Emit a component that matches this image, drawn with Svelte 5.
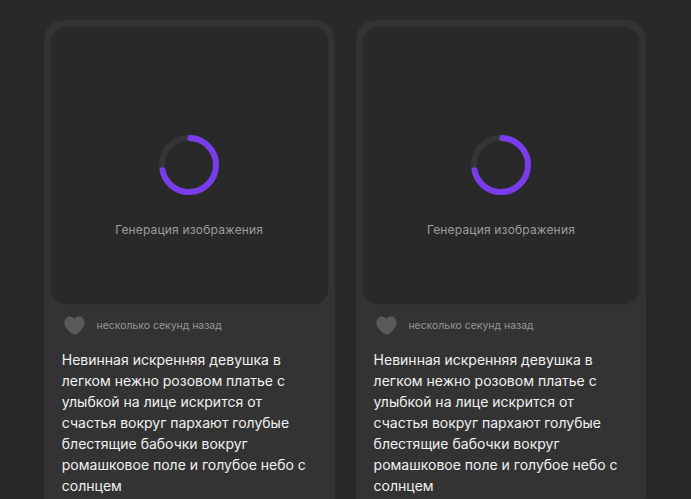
<script>
	const cards = [1, 2].map((id) => ({
		id,
		text: 'Невинная искренняя девушка в легком нежно розовом платье с улыбкой на лице искрится от счастья вокруг пархают голубые блестящие бабочки вокруг ромашковое поле и голубое небо с солнцем',
		time: 'несколько секунд назад'
	}));
</script>

<main class="page">
	<div class="grid">
		{#each cards as card (card.id)}
			<article class="card">
				<div class="preview">
					<svg class="spinner" width="60" height="60" viewBox="0 0 60 60">
						<circle class="track" cx="30" cy="30" r="27" />
						<circle class="arc" cx="30" cy="30" r="27" pathLength="100" stroke-dasharray="71 100" transform="rotate(-87 30 30)" />
					</svg>
					<span class="status">Генерация изображения</span>
				</div>
				<div class="meta">
					<svg class="heart" width="21" height="19" viewBox="0 0 21 19">
						<path d="M10.5 18.800C9.200 18.800 7 17.200 4.800 15 2 12.200.4 9.900.4 6.800.4 3.200 2.800.6 6 .6c1.900 0 3.500.9 4.500 2.300C11.500 1.500 13.100.6 15 .6c3.200 0 5.600 2.600 5.600 6.200 0 3.100-1.600 5.400-4.400 8.200-2.200 2.200-4.400 3.800-5.700 3.800z" />
					</svg>
					<span class="time">{card.time}</span>
				</div>
				<p class="prompt">{card.text}</p>
			</article>
		{/each}
	</div>
</main>

<style>
	:global(body) {
		margin: 0;
		background: #292929;
		overflow: hidden;
	}

	.page {
		height: 499px;
		overflow: hidden;
		padding: 20px 0 0 43.8px;
		box-sizing: border-box;
		font-family: Inter, 'Noto Sans', sans-serif;
	}

	.grid {
		display: grid;
		grid-template-columns: repeat(2, 290.8px);
		gap: 21px;
	}

	.card {
		background: #333333;
		border-radius: 20px;
		padding: 7px 7px 20px;
	}

	.preview {
		height: 277px;
		background: #292929;
		border-radius: 16px;
		display: flex;
		flex-direction: column;
		align-items: center;
		box-shadow: 0 0 2px rgba(0, 0, 0, 0.25);
	}

	.spinner {
		margin-top: 108px;
	}

	.track,
	.arc {
		fill: none;
		stroke-width: 6;
	}

	.track {
		stroke: #363636;
	}

	.arc {
		stroke: #7a3dee;
		stroke-linecap: round;
	}

	.status {
		margin-top: 27px;
		font-size: 12px;
		line-height: 16px;
		letter-spacing: 0.17px;
		color: #9c9c9c;
	}

	.meta {
		display: flex;
		align-items: center;
		gap: 11.8px;
		margin: 10px 0 0 13px;
		height: 22px;
	}

	.heart {
		fill: #5a5a5a;
	}

	.time {
		font-size: 10.45px;
		color: #959595;
	}

	.prompt {
		margin: 13px 11px 0 11px;
		font-size: 14px;
		line-height: 21px;
		color: #f0f0f0;
	}
</style>
